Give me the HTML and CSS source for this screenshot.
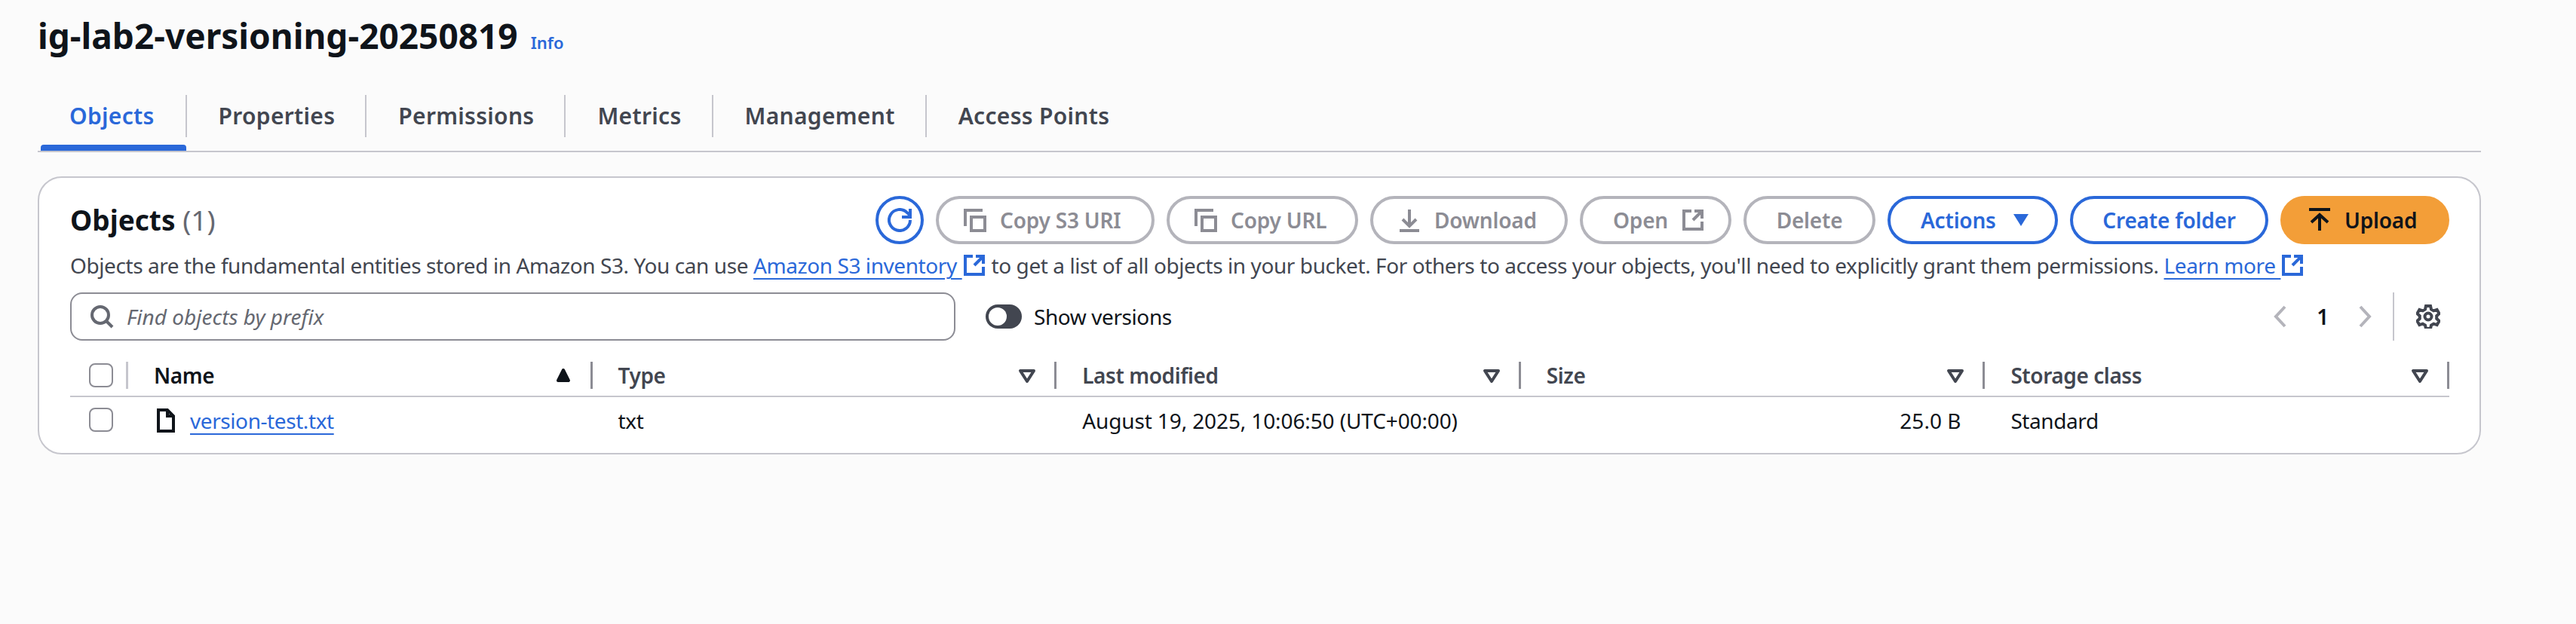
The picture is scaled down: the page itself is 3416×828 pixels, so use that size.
FILE: index.html
```html
<!DOCTYPE html>
<html lang="en">
<head>
  <meta charset="UTF-8" />
  <title>ig-lab2-versioning-20250819</title>
  <link rel="stylesheet" href="styles.css">
</head>
<body>

  <main class="page">
    <div class="title-row">
      <h1>ig-lab2-versioning-20250819</h1>
      <a class="info" href="#">Info</a>
    </div>

    <div class="tabs">
      <a class="tab active" href="#"><span>Objects</span></a>
      <a class="tab" href="#"><span>Properties</span></a>
      <a class="tab" href="#"><span>Permissions</span></a>
      <a class="tab" href="#"><span>Metrics</span></a>
      <a class="tab" href="#"><span>Management</span></a>
      <a class="tab" href="#"><span class="last">Access Points</span></a>
    </div>

    <section class="card">
      <div class="card-head">
        <h2>Objects <span class="count">(1)</span></h2>
        <div class="actions">
          <button class="refresh" type="button" aria-label="Refresh">
            <svg class="icon" viewBox="0 0 32 32"><path d="M30 16a14 14 0 1 1-4.1-9.9L30 10"/><path d="M30 1v11H19"/></svg>
          </button>
          <button class="btn disabled copy-s3" type="button">
            <svg class="icon" viewBox="0 0 32 32"><path d="M3 24V3h23"/><rect x="11" y="12" width="18" height="18"/></svg>
            Copy S3 URI
          </button>
          <button class="btn disabled copy-url" type="button">
            <svg class="icon" viewBox="0 0 32 32"><path d="M3 24V3h23"/><rect x="11" y="12" width="18" height="18"/></svg>
            Copy URL
          </button>
          <button class="btn disabled download" type="button">
            <svg class="icon" viewBox="0 0 32 32"><path d="M16 2v22"/><path d="M7 15l9 9 9-9"/><path d="M3 30h26"/></svg>
            Download
          </button>
          <button class="btn disabled icon-right open" type="button">
            Open
            <svg class="icon" viewBox="0 0 32 32"><path d="M14 4H4v24h24V18"/><path d="M16 16L28 4"/><path d="M18 4h10v10"/></svg>
          </button>
          <button class="btn disabled text-only delete" type="button">Delete</button>
          <button class="btn normal actions-btn" type="button">
            Actions
            <svg class="caret" viewBox="0 0 22 18"><path d="M1 1h20L11 17z"/></svg>
          </button>
          <button class="btn normal text-only create" type="button">Create folder</button>
          <button class="btn primary" type="button">
            <svg class="icon" viewBox="0 0 32 32"><path d="M2 2h28"/><path d="M16 30V9"/><path d="M5 19L16 9l11 10"/></svg>
            Upload
          </button>
        </div>
      </div>

      <p class="desc">Objects are the fundamental entities stored in Amazon S3. You can use <a href="#">Amazon S3 inventory </a><svg class="icon ext" viewBox="0 0 32 32"><path d="M14 4H4v24h24V18"/><path d="M16 16L28 4"/><path d="M18 4h10v10"/></svg> to get a list of all objects in your bucket. For others to access your objects, you'll need to explicitly grant them permissions. <a href="#">Learn more </a><svg class="icon ext" viewBox="0 0 32 32"><path d="M14 4H4v24h24V18"/><path d="M16 16L28 4"/><path d="M18 4h10v10"/></svg></p>

      <div class="filters">
        <label class="search">
          <svg class="icon" viewBox="0 0 32 32"><circle cx="14" cy="14" r="11"/><path d="M22 22l8 8"/></svg>
          <input type="text" placeholder="Find objects by prefix" />
        </label>
        <div class="toggle-wrap">
          <span class="toggle"><span class="knob"></span></span>
          Show versions
        </div>
        <div class="pager">
          <svg class="icon chevron" viewBox="0 0 32 32"><path d="M22 3L10 16l12 13"/></svg>
          <span class="page-num">1</span>
          <svg class="icon chevron" viewBox="0 0 32 32"><path d="M10 3l12 13-12 13"/></svg>
          <button class="gear" type="button" aria-label="Preferences">
            <svg class="icon" viewBox="0 0 32 32"><circle cx="16" cy="16" r="4.5"/><path d="M13 2h6l1 4.5 3.200 1.800 4.400-1.400 3 5.200-3.400 3.100v3.600l3.400 3.100-3 5.200-4.400-1.400-3.200 1.800-1 4.500h-6l-1-4.500-3.200-1.800-4.400 1.400-3-5.200 3.400-3.100v-3.600l-3.400-3.100 3-5.200 4.400 1.400 3.200-1.800z"/></svg>
          </button>
        </div>
      </div>

      <div class="table">
        <div class="row head">
          <div class="cell check"><span class="box"></span></div>
          <div class="cell sorted">Name
            <svg class="sort" viewBox="0 0 32 32"><path d="M16 9l7 14H9z"/></svg>
          </div>
          <div class="cell">Type
            <svg class="sort" viewBox="0 0 32 32"><path d="M7 10h18l-9 14z"/></svg>
          </div>
          <div class="cell">Last modified
            <svg class="sort" viewBox="0 0 32 32"><path d="M7 10h18l-9 14z"/></svg>
          </div>
          <div class="cell">Size
            <svg class="sort" viewBox="0 0 32 32"><path d="M7 10h18l-9 14z"/></svg>
          </div>
          <div class="cell">Storage class
            <svg class="sort" viewBox="0 0 32 32"><path d="M7 10h18l-9 14z"/></svg>
          </div>
        </div>
        <div class="row body">
          <div class="cell check"><span class="box"></span></div>
          <div class="cell name">
            <svg class="icon file" viewBox="0 0 32 32"><path d="M6 2h12l8 8v20H6z"/><path d="M18 2v8h8"/></svg>
            <a href="#">version-test.txt</a>
          </div>
          <div class="cell">txt</div>
          <div class="cell date">August 19, 2025, 10:06:50 (UTC+00:00)</div>
          <div class="cell size">25.0 B</div>
          <div class="cell">Standard</div>
        </div>
      </div>
    </section>
  </main>

</body>
</html>
```

FILE: styles.css
```css
* {
  box-sizing: border-box;
}

body {
  margin: 0;
  background-color: #fbfbfb;
  color: #0f141a;
  font-family: "Noto Sans", sans-serif;
  font-size: 28px;
  line-height: 40px;
  letter-spacing: -0.42px;
}

a {
  color: #2a68d9;
}

.page {
  padding: 23px 126px 0 50px;
}

.icon {
  width: 32px;
  height: 32px;
  flex: none;
  fill: none;
  stroke: currentColor;
  stroke-width: 4;
}

/* title */
.title-row {
  display: flex;
  align-items: baseline;
  gap: 17px;
  height: 48px;
}

h1 {
  margin: 0;
  font-size: 46px;
  line-height: 48px;
  font-weight: 700;
  letter-spacing: 0;
}

.info {
  font-size: 22px;
  font-weight: 600;
  letter-spacing: 0;
  text-decoration: none;
}

/* tabs */
.tabs {
  display: flex;
  margin-top: 55px;
  height: 76px;
  border-bottom: 2px solid #c6c6cd;
}

.tab {
  height: 74px;
  padding-left: 4px;
  color: #424650;
  font-size: 30px;
  font-weight: 600;
  letter-spacing: 0.3px;
  text-decoration: none;
}

.tab span {
  display: block;
  height: 56px;
  padding: 8px 40px 0 42px;
  border-right: 2px solid #c6c6cd;
}

.tab span.last {
  border-right: none;
}

.tab + .tab {
  padding-left: 0;
}

.tab.active {
  color: #2a68d9;
  position: relative;
}

.tab.active span {
  padding: 8px 41px 0 38px;
}

.tab.active::after {
  content: "";
  position: absolute;
  left: 4px;
  right: 1px;
  bottom: 0;
  height: 8px;
  border-radius: 4px 4px 0 0;
  background-color: #2a68d9;
}

/* card */
.card {
  margin-top: 32px;
  height: 369px;
  padding: 24px 40px 0 41px;
  background: white;
  border: 2px solid #c6c6cd;
  border-radius: 32px;
}

.card-head {
  display: flex;
  justify-content: space-between;
  align-items: center;
  height: 64px;
}

h2 {
  margin: 0;
  font-size: 37px;
  line-height: 48px;
  font-weight: 700;
  letter-spacing: 0;
}

.count {
  color: #656871;
  font-weight: 400;
}

.actions {
  display: flex;
  gap: 16px;
}

.btn {
  display: flex;
  align-items: center;
  gap: 17px;
  height: 64px;
  padding: 0 0 0 32px;
  background: white;
  border: 4px solid;
  border-radius: 32px;
  font-family: inherit;
  font-size: 28px;
  font-weight: 600;
  letter-spacing: -0.2px;
  white-space: nowrap;
  cursor: pointer;
}

.btn.icon-right {
  padding: 0 0 0 40px;
}

.btn.text-only {
  justify-content: center;
  padding: 0;
}

.copy-s3 { width: 290px; }
.copy-url { width: 254px; }
.download { width: 262px; }
.open { width: 201px; }
.delete { width: 175px; }
.create { width: 263px; }

.btn.disabled {
  color: #8c8c94;
  border-color: #b4b4bb;
}

.btn.normal {
  color: #2a68d9;
  border-color: #2a68d9;
}

.btn.actions-btn {
  width: 226px;
  gap: 22px;
  padding-left: 40px;
}

.btn.primary {
  width: 224px;
  color: #0f141a;
  background-color: #f39e38;
  border-color: #f39e38;
}

.caret {
  width: 22px;
  height: 18px;
  fill: currentColor;
}

.refresh {
  display: flex;
  align-items: center;
  justify-content: center;
  width: 64px;
  height: 64px;
  padding: 0;
  color: #2a68d9;
  background: white;
  border: 4px solid #2a68d9;
  border-radius: 50%;
}

.desc {
  margin: 8px 0 0;
  height: 40px;
  color: #424650;
  white-space: nowrap;
}

.desc a {
  text-decoration-thickness: 2px;
  text-underline-offset: 6px;
  white-space: pre;
}

.ext {
  width: 32px;
  height: 32px;
  color: #2a68d9;
  vertical-align: -5px;
}

/* filter row */
.filters {
  display: flex;
  align-items: center;
  margin-top: 16px;
  height: 64px;
}

.search {
  display: flex;
  align-items: center;
  gap: 15px;
  width: 1174px;
  height: 64px;
  padding-left: 24px;
  color: #656871;
  border: 2px solid #8c8c94;
  border-radius: 16px;
}

.search input {
  flex: 1;
  border: none;
  outline: none;
  background: none;
  font-family: inherit;
  font-size: 28px;
  font-style: italic;
}

.search input::placeholder {
  color: #656871;
  opacity: 1;
}

.toggle-wrap {
  display: flex;
  align-items: center;
  gap: 16px;
  margin-left: 40px;
}

.toggle {
  display: flex;
  width: 48px;
  height: 32px;
  padding: 4px;
  background-color: #424650;
  border-radius: 16px;
}

.knob {
  width: 24px;
  height: 24px;
  background: white;
  border-radius: 50%;
}

.pager {
  display: flex;
  align-items: center;
  margin-left: auto;
}

.chevron {
  color: #b4b4bb;
}

.page-num {
  width: 80px;
  text-align: center;
  font-weight: 600;
}

.gear {
  display: flex;
  align-items: center;
  height: 64px;
  margin-left: 21px;
  padding: 0 12px 0 29px;
  color: #424650;
  background: none;
  border: none;
  border-left: 2px solid #c6c6cd;
}

/* table */
.table {
  margin-top: 28px;
}

.row {
  display: grid;
  grid-template-columns: 77px repeat(5, 1fr);
}

.head {
  height: 47px;
  padding-bottom: 11px;
  border-bottom: 2px solid #c6c6cd;
  color: #424650;
  font-weight: 600;
}

.head .cell {
  display: flex;
  align-items: center;
  justify-content: space-between;
  height: 36px;
  padding: 0 20px 0 34px;
  border-right: 3px solid #8c8c94;
}

.head .cell.check {
  padding: 0 0 0 25px;
  border-right-color: #c6c6cd;
}

.head .cell.sorted {
  color: #0f141a;
}

.sort {
  width: 32px;
  height: 32px;
  flex: none;
  fill: none;
  stroke: currentColor;
  stroke-width: 4;
  stroke-linejoin: round;
}

.sorted .sort {
  fill: currentColor;
}

.box {
  display: block;
  width: 32px;
  height: 32px;
  background: white;
  border: 2px solid #8c8c94;
  border-radius: 8px;
}

.body {
  align-items: center;
  height: 60px;
}

.body .cell {
  padding-left: 34px;
  padding-top: 2px;
}

.body .cell.check {
  padding-left: 25px;
  padding-top: 0;
}

.body .name {
  display: flex;
  align-items: center;
  gap: 16px;
}

.name a {
  text-decoration-thickness: 2px;
  text-underline-offset: 6px;
}

.body .date {
  letter-spacing: -0.12px;
}

.body .size {
  padding-right: 32px;
  text-align: right;
  letter-spacing: 0;
}
```
